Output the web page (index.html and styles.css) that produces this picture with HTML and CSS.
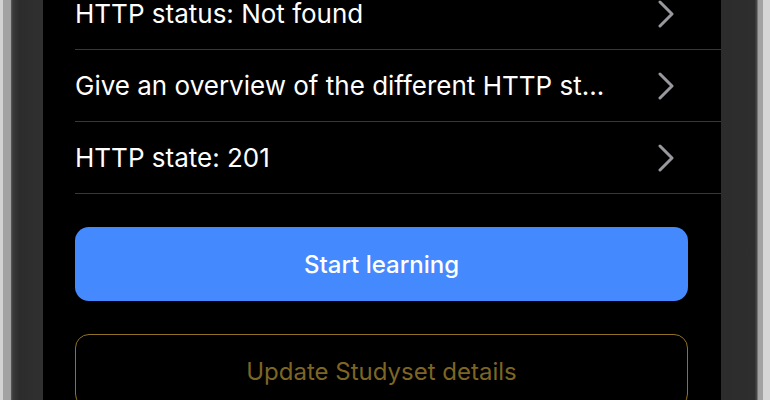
FILE: index.html
```html
<!DOCTYPE html>
<html>
<head>
  <title>Studyset</title>
  <link rel="stylesheet" href="styles.css">
</head>
<body>
  <div class="device">
    <div class="bezel bezel-left"></div>
    <div class="screen">
      <div class="question-list">
        <div class="question-item">
          <span class="question-text">HTTP status: Not found</span>
          <svg class="chevron" width="16" height="28" viewBox="0 0 16 28"><polyline points="2,2 14,14 2,26"/></svg>
        </div>
        <div class="question-item">
          <span class="question-text">Give an overview of the different HTTP st...</span>
          <svg class="chevron" width="16" height="28" viewBox="0 0 16 28"><polyline points="2,2 14,14 2,26"/></svg>
        </div>
        <div class="question-item">
          <span class="question-text">HTTP state: 201</span>
          <svg class="chevron" width="16" height="28" viewBox="0 0 16 28"><polyline points="2,2 14,14 2,26"/></svg>
        </div>
      </div>
      <div class="actions">
        <button class="primary-button">Start learning</button>
        <button class="outline-button">Update Studyset details</button>
      </div>
    </div>
    <div class="bezel bezel-right"></div>
  </div>
</body>
</html>
```

FILE: styles.css
```css
body {
  margin: 0;
  width: 770px;
  height: 400px;
  overflow: hidden;
  background: #000;
  font-family: Inter, "Noto Sans", sans-serif;
  color: #fff;
}

.device {
  display: flex;
  height: 400px;
}

.bezel {
  flex-shrink: 0;
  height: 100%;
}

.bezel-left {
  width: 43px;
  background: linear-gradient(to right, #d2d2d2 0, #d2d2d2 3px, #a2a2a2 3px, #a2a2a2 11px, #5c5c5c 11px, #3a3a3a 13px, #2c2c2c 20px, #303030 43px);
}

.bezel-right {
  width: 49px;
  background: linear-gradient(to right, #2c2c2c 0, #2e2e2e 34px, #474747 35px, #474747 36px, #a2a2a2 37px, #a2a2a2 42px, #d6d6d6 42px, #d6d6d6 49px);
}

.screen {
  flex: 1;
  background: #000;
  padding-left: 32px;
  overflow: hidden;
}

.question-list {
  margin-top: -22px;
}

.question-item {
  display: flex;
  align-items: center;
  height: 71px;
  padding-right: 47px;
  border-bottom: 1px solid #38383a;
}

.question-text {
  flex: 1;
  min-width: 0;
  margin-right: 40px;
  font-size: 26px;
  white-space: nowrap;
  overflow: hidden;
  text-overflow: ellipsis;
}

.chevron {
  flex-shrink: 0;
  fill: none;
  stroke: #98989e;
  stroke-width: 3;
  stroke-linecap: round;
  stroke-linejoin: round;
}

.actions {
  display: flex;
  flex-direction: column;
  gap: 33px;
  padding: 33px 33px 0 0;
}

.primary-button,
.outline-button {
  height: 74px;
  border-radius: 14px;
  font-family: inherit;
  font-size: 24px;
  cursor: pointer;
}

.primary-button {
  border: none;
  background: #4589ff;
  color: #fff;
  font-weight: 500;
}

.outline-button {
  background: transparent;
  border: 1.5px solid #8f7222;
  color: #7d6524;
  font-weight: 400;
}
```
